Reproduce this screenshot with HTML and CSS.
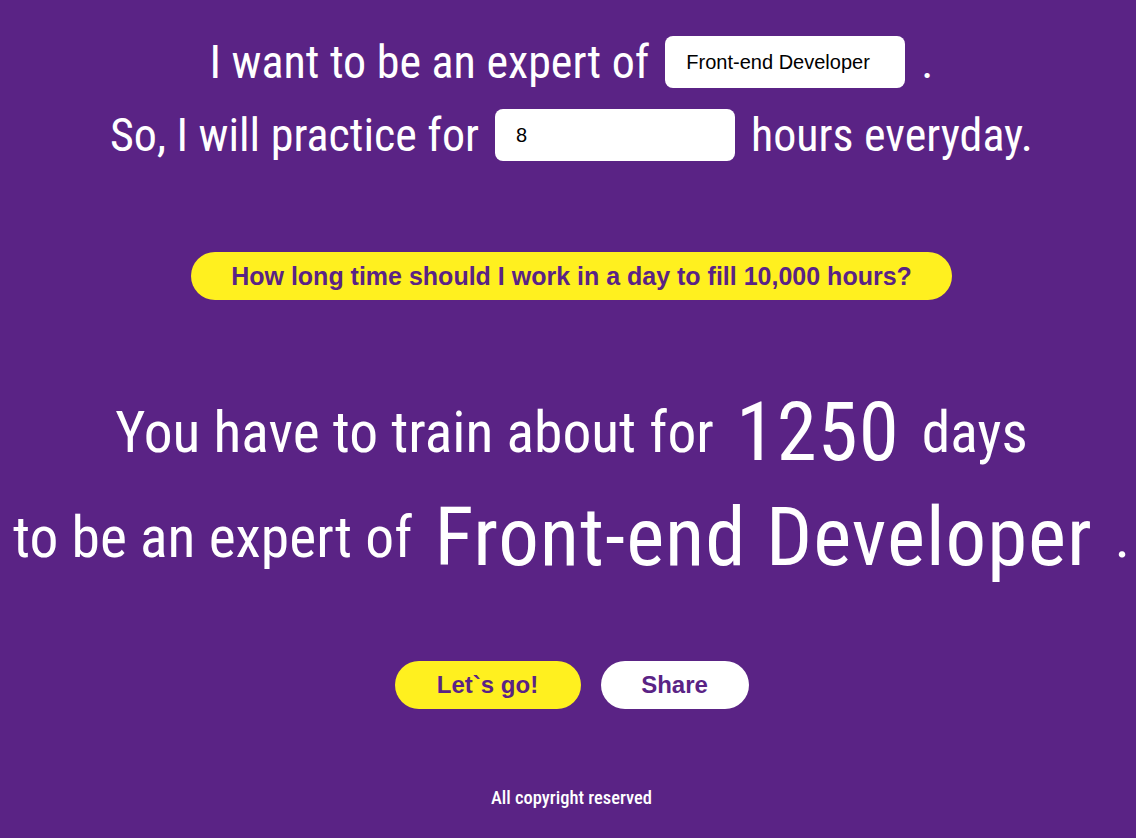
FILE: index.html
```html
<!DOCTYPE html>
<html lang="en">
<head>
<meta charset="utf-8">
<title>10,000 hours</title>
<link rel="stylesheet" href="styles.css">
</head>
<body>
<main class="page">
  <section class="form">
    <div class="row row-first">
      <span class="label">I want to be an expert of</span>
      <input class="field" type="text" value="Front-end Developer">
      <span class="label">.</span>
    </div>
    <div class="row row-second">
      <span class="label">So, I will practice for</span>
      <input class="field" type="text" value="8">
      <span class="label">hours everyday.</span>
    </div>
  </section>
  <div class="ask">
    <button class="btn btn-ask" type="button">How long time should I work in a day to fill 10,000 hours?</button>
  </div>
  <section class="result">
    <div class="result-line line-one">
      <span class="r-text">You have to train about for</span>
      <span class="r-big">1250</span>
      <span class="r-text">days</span>
    </div>
    <div class="result-line line-two">
      <span class="r-text">to be an expert of</span>
      <span class="r-big">Front-end Developer</span>
      <span class="r-text">.</span>
    </div>
  </section>
  <div class="actions">
    <button class="btn btn-go" type="button">Let`s go!</button>
    <button class="btn btn-share" type="button">Share</button>
  </div>
  <footer class="footer">All copyright reserved</footer>
</main>
</body>
</html>
```
FILE: styles.css
```css
html, body {
  margin: 0;
  padding: 0;
}
body {
  background: #5a2385;
  color: #ffffff;
  font-family: Roboto, "Open Sans", sans-serif;
  font-stretch: 75%;
  width: 1136px;
  height: 838px;
  overflow: hidden;
}
.page {
  display: flex;
  flex-direction: column;
  align-items: center;
  padding-top: 36px;
  padding-left: 7px;
}
.form {
  display: flex;
  flex-direction: column;
  align-items: center;
  gap: 21px;
}
.row {
  display: flex;
  align-items: center;
  gap: 16px;
  white-space: nowrap;
  height: 52px;
}
.label {
  font-size: 46px;
}
.field {
  box-sizing: border-box;
  width: 240px;
  height: 52px;
  border: none;
  border-radius: 8px;
  background: #ffffff;
  padding: 0 21px;
  font-family: "Liberation Sans", Arial, sans-serif;
  font-stretch: normal;
  font-size: 20px;
  color: #000000;
  outline: none;
}
.ask {
  margin-top: 91px;
}
.btn {
  border: none;
  border-radius: 24px;
  height: 48px;
  padding: 0;
  font-family: "Liberation Sans", Arial, sans-serif;
  font-stretch: normal;
  font-weight: bold;
  color: #5a2385;
  cursor: pointer;
}
.btn-ask {
  width: 761px;
  background: #fff01f;
  font-size: 25px;
}
.result {
  margin-top: 80px;
  display: flex;
  flex-direction: column;
  align-items: center;
}
.result-line {
  display: flex;
  align-items: center;
  gap: 22px;
  white-space: nowrap;
  height: 105px;
}
.r-text {
  font-size: 57.5px;
}
.r-big {
  font-size: 81px;
  letter-spacing: 1px;
}
.actions {
  margin-top: 71px;
  display: flex;
  gap: 20px;
}
.btn-go {
  width: 186px;
  background: #fff01f;
  font-size: 24px;
}
.btn-share {
  width: 148px;
  background: #ffffff;
  font-size: 24px;
}
.footer {
  margin-top: 78px;
  font-size: 18.5px;
  font-weight: 500;
}
```
